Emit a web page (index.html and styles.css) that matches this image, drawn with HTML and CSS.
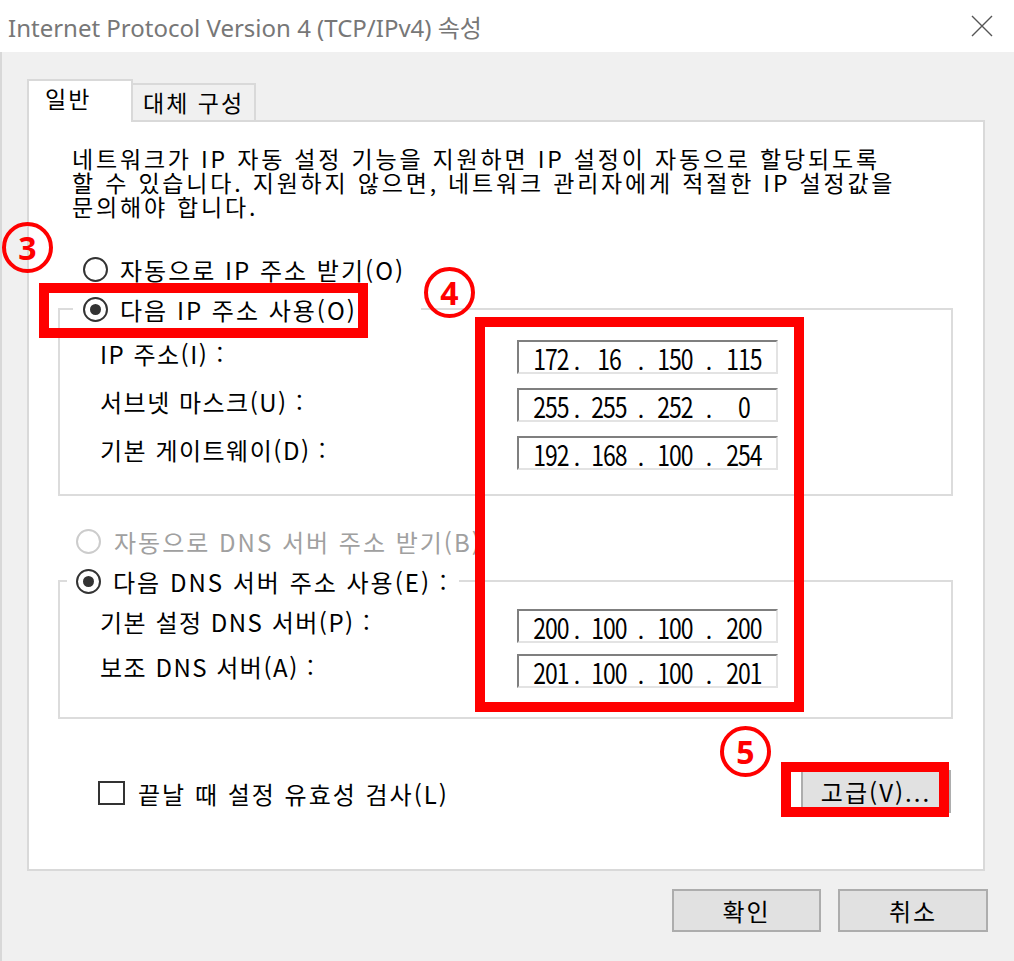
FILE: index.html
```html
<!DOCTYPE html>
<html lang="ko">
<head>
    <meta charset="UTF-8">
    <title>Internet Protocol Version 4 (TCP/IPv4) 속성</title>
    <link rel="stylesheet" href="styles.css">
</head>
<body>
    <div class="window">
        <!-- 제목 표시줄 -->
        <div class="titlebar">
            <span class="title">Internet Protocol Version 4 (TCP/IPv4) 속성</span>
            <svg class="close" width="22" height="22" viewBox="0 0 22 22">
                <path d="M1 1L21 21M21 1L1 21" stroke="#555" stroke-width="1.4" fill="none"/>
            </svg>
        </div>

        <div class="content">
            <div class="tabs">
                <div class="tab active">일반</div>
                <div class="tab alt">대체 구성</div>
            </div>

            <div class="panel">
                <p class="desc">네트워크가 IP 자동 설정 기능을 지원하면 IP 설정이 자동으로 할당되도록<br>할 수 있습니다. 지원하지 않으면, 네트워크 관리자에게 적절한 IP 설정값을<br>문의해야 합니다.</p>

                <div class="radio ip-auto"><span class="dot"></span>자동으로 IP 주소 받기(O)</div>

                <fieldset class="group ip-group">
                    <legend><div class="radio checked"><span class="dot"></span>다음 IP 주소 사용(O)</div></legend>
                    <div class="rows">
                        <div class="field-row">
                            <span class="lbl">IP 주소(I) :</span>
                            <div class="ipbox"><span>172</span><i>.</i><span>16</span><i>.</i><span>150</span><i>.</i><span>115</span></div>
                        </div>
                        <div class="field-row">
                            <span class="lbl">서브넷 마스크(U) :</span>
                            <div class="ipbox"><span>255</span><i>.</i><span>255</span><i>.</i><span>252</span><i>.</i><span>0</span></div>
                        </div>
                        <div class="field-row">
                            <span class="lbl">기본 게이트웨이(D) :</span>
                            <div class="ipbox"><span>192</span><i>.</i><span>168</span><i>.</i><span>100</span><i>.</i><span>254</span></div>
                        </div>
                    </div>
                </fieldset>

                <div class="radio dns-auto disabled"><span class="dot"></span>자동으로 DNS 서버 주소 받기(B)</div>

                <fieldset class="group dns-group">
                    <legend><div class="radio checked"><span class="dot"></span>다음 DNS 서버 주소 사용(E) :</div></legend>
                    <div class="rows">
                        <div class="field-row">
                            <span class="lbl">기본 설정 DNS 서버(P) :</span>
                            <div class="ipbox"><span>200</span><i>.</i><span>100</span><i>.</i><span>100</span><i>.</i><span>200</span></div>
                        </div>
                        <div class="field-row">
                            <span class="lbl">보조 DNS 서버(A) :</span>
                            <div class="ipbox"><span>201</span><i>.</i><span>100</span><i>.</i><span>100</span><i>.</i><span>201</span></div>
                        </div>
                    </div>
                </fieldset>

                <div class="check-row">
                    <div class="check"><span class="box"></span>끝날 때 설정 유효성 검사(L)</div>
                    <div class="btn advanced">고급(V)...</div>
                </div>
            </div>

            <div class="actions">
                <div class="btn">확인</div>
                <div class="btn">취소</div>
            </div>
        </div>

        <!-- 빨간 표시 -->
        <div class="mark-circle c3">3</div>
        <div class="mark-circle c4">4</div>
        <div class="mark-circle c5">5</div>
        <div class="mark-box b3"></div>
        <div class="mark-box b4"></div>
        <div class="mark-box b5"></div>
    </div>
</body>
</html>
```

FILE: styles.css
```css
* { box-sizing: border-box; }
body {
    margin: 0;
    background-color: #f0f0f0;
    font-family: 'Noto Sans CJK KR', sans-serif;
    color: #000;
}
.window {
    position: relative;
    width: 1014px;
    height: 961px;
    overflow: hidden;
}
.titlebar {
    height: 52px;
    background-color: #fff;
    display: flex;
    align-items: center;
    justify-content: space-between;
    padding: 0 21px 0 8px;
}
.title {
    font-family: 'Noto Sans', 'Noto Sans CJK KR', sans-serif;
    font-size: 24px;
    color: #777;
}
.content {
    height: 909px;
    border-left: 2px solid #d8d8d8;
    padding: 27px 26px 0 25px;
    letter-spacing: 2px;
}

/* 탭 */
.tabs {
    display: flex;
    align-items: flex-end;
    height: 43px;
}
.tab {
    position: relative;
    border: 2px solid #d9d9d9;
    border-bottom: none;
    font-size: 23px;
    line-height: 30px;
    padding-top: 2px;
}
.tab.active {
    z-index: 2;
    width: 106px;
    height: 43px;
    background-color: #fff;
    padding-left: 16px;
}
.tab.alt {
    width: 123px;
    height: 39px;
    border-left: none;
    padding-left: 10px;
}
.panel {
    position: relative;
    z-index: 1;
    width: 958px;
    height: 751px;
    margin-top: -2px;
    border: 2px solid #d9d9d9;
    background-color: #fff;
}
.desc {
    margin: 24px 0 0 43px;
    font-size: 23px;
    line-height: 24px;
    letter-spacing: 2.8px;
}

/* 라디오 버튼 */
.radio {
    display: flex;
    align-items: center;
    gap: 12px;
    height: 30px;
    font-size: 24px;
    white-space: nowrap;
}
.radio .dot {
    flex: none;
    display: flex;
    align-items: center;
    justify-content: center;
    width: 25px;
    height: 25px;
    border: 2px solid #333;
    border-radius: 50%;
    background-color: #fff;
}
.radio.checked .dot::after {
    content: '';
    width: 11px;
    height: 11px;
    border-radius: 50%;
    background-color: #333;
}
.radio.disabled { color: #a0a0a0; }
.radio.disabled .dot { border-color: #cccccc; }
.ip-auto { margin: 36px 0 0 54px; }
.dns-auto { margin: 30px 0 0 47px; gap: 13px; }

/* 그룹 상자 */
.group {
    width: 895px;
    margin: 10px 0 0 29px;
    padding: 0;
    border: 2px solid #dcdcdc;
    min-inline-size: auto;
}
.group legend { padding: 0; }
.ip-group legend {
    width: 348px;
    margin-left: 13px;
    padding-left: 10px;
}
.dns-group legend {
    width: 392px;
    margin-left: 7px;
    padding-left: 9px;
}
.rows { padding-left: 40px; }
.ip-group .rows { padding: 9px 0 17px 40px; }
.dns-group .rows { padding: 7px 0 24px 40px; }
.field-row {
    display: flex;
    align-items: center;
    height: 48px;
}
.dns-group .field-row { height: 45px; }
.lbl {
    width: 417px;
    font-size: 24px;
    letter-spacing: 1.5px;
    margin-bottom: 8px;
}
.ipbox {
    display: grid;
    grid-template-columns: 44px 8px 56px 8px 60px 8px 62px;
    align-items: center;
    width: 261px;
    height: 34px;
    padding-left: 10px;
    border-top: 2px solid #7f7f7f;
    border-left: 2px solid #7f7f7f;
    border-right: 2px solid #e3e3e3;
    border-bottom: 2px solid #e3e3e3;
    font-size: 23px;
    line-height: 28px;
    letter-spacing: -1px;
}
.ipbox span {
    text-align: center;
    transform: scaleY(1.22);
}
.ipbox i {
    font-style: normal;
    text-align: center;
    letter-spacing: 0;
    padding-top: 4px;
}

/* 확인란, 버튼 */
.check-row {
    display: flex;
    align-items: center;
    justify-content: space-between;
    height: 43px;
    margin: 51px 32px 0 69px;
}
.check {
    display: flex;
    align-items: center;
    gap: 13px;
    font-size: 24px;
    padding-top: 3px;
}
.check .box {
    width: 27px;
    height: 24px;
    border: 2px solid #333;
    background-color: #fff;
}
.btn {
    display: flex;
    align-items: center;
    justify-content: center;
    width: 149px;
    height: 43px;
    border: 2px solid #adadad;
    background-color: #e1e1e1;
    font-size: 24px;
}
.advanced { width: 150px; }
.actions {
    display: flex;
    justify-content: flex-end;
    gap: 17px;
    margin-top: 18px;
}
.actions .btn:last-child { width: 150px; }

/* 빨간 표시 */
.mark-circle {
    position: absolute;
    z-index: 5;
    display: flex;
    align-items: center;
    justify-content: center;
    width: 51px;
    height: 51px;
    border: 4px solid #ff0000;
    border-radius: 50%;
    color: #ff0000;
    font-family: 'Noto Sans', sans-serif;
    font-size: 32px;
    font-weight: bold;
    line-height: 1;
}
.c3 { left: 2px; top: 222px; }
.c4 { left: 424px; top: 267px; }
.c5 { left: 720px; top: 726px; }
.mark-box {
    position: absolute;
    z-index: 5;
    border: 10px solid #ff0000;
}
.b3 { left: 39px; top: 283px; width: 329px; height: 55px; }
.b4 { left: 475px; top: 317px; width: 329px; height: 395px; }
.b5 { left: 781px; top: 762px; width: 168px; height: 55px; }
```
